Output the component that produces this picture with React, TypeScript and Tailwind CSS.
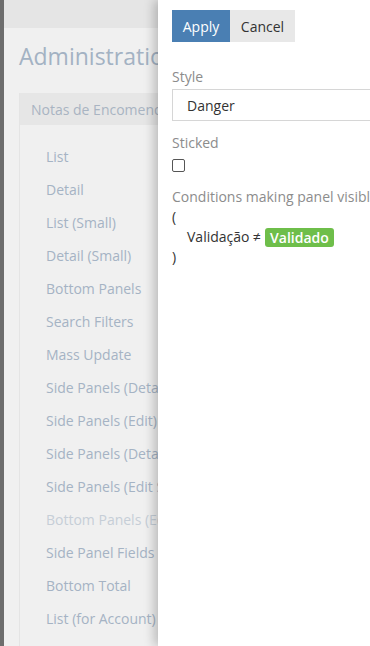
import React from 'react';

const layouts = [
  { label: 'List' },
  { label: 'Detail' },
  { label: 'List (Small)' },
  { label: 'Detail (Small)' },
  { label: 'Bottom Panels' },
  { label: 'Search Filters' },
  { label: 'Mass Update' },
  { label: 'Side Panels (Detail)' },
  { label: 'Side Panels (Edit)' },
  { label: 'Side Panels (Detail Small)' },
  { label: 'Side Panels (Edit Small)' },
  { label: 'Bottom Panels (Edit)', muted: true },
  { label: 'Side Panel Fields' },
  { label: 'Bottom Total' },
  { label: 'List (for Account)' },
];

export default function App() {
  return (
    <div
      className="relative flex h-[646px] w-[370px] overflow-hidden text-[14px]"
      style={{ fontFamily: '"Open Sans", "Liberation Sans", sans-serif' }}
    >
      {/* dark edge */}
      <div className="w-[4px] shrink-0 bg-[#6d6d6d]" />

      {/* page behind the modal */}
      <div className="flex flex-1 flex-col bg-[#f0f0f0]">
        <div className="h-[28px] bg-[#e5e5e5]" />
        <h1 className="mt-[12px] whitespace-nowrap pl-[15px] text-[23px] leading-[32px] text-[#a3b2c3]">
          Administration
        </h1>
        <div className="ml-[15px] mt-[21px] flex flex-1 flex-col border-l border-[#e4e4e4]">
          <div className="flex h-[32px] items-center whitespace-nowrap bg-[#e6e6e6] pl-[11px] text-[#a9b4c2]">
            Notas de Encomenda
          </div>
          <div className="flex flex-col pt-[15px] pl-[26px]">
            {layouts.map((item) => (
              <div
                key={item.label}
                className={`flex h-[33px] items-center whitespace-nowrap ${
                  item.muted ? 'text-[#c6ced7]' : 'text-[#a5b3c4]'
                }`}
              >
                {item.label}
              </div>
            ))}
          </div>
        </div>
      </div>

      {/* side modal */}
      <div className="absolute top-0 right-0 bottom-0 w-[212px] overflow-hidden bg-white pl-[14px] shadow-[-4px_0_10px_rgba(0,0,0,0.22)]">
        <div className="mt-[10px] flex">
          <button className="h-[32px] w-[58px] bg-[#4a7fb3] text-white">Apply</button>
          <button className="h-[32px] w-[65px] bg-[#e8e8e8] text-[#333]">Cancel</button>
        </div>

        <div className="mt-[25px] text-[#8c8c8c] leading-[20px]">Style</div>
        <div className="mt-[2px] flex h-[32px] items-center border border-r-0 border-[#d6d6d6] pl-[14px] text-[#333]">
          Danger
        </div>

        <div className="mt-[12px] text-[#8c8c8c] leading-[20px]">Sticked</div>
        <div className="mt-[6px] h-[13px] w-[13px] rounded-[2px] border border-[#555] bg-white" />

        <div className="mt-[15px] whitespace-nowrap text-[#8c8c8c] leading-[20px]">
          Conditions making panel visible
        </div>
        <div className="text-[#333] leading-[20px]">
          <div>(</div>
          <div className="flex items-center pl-[15px]">
            <span>Validação ≠</span>
            <span className="ml-[4px] rounded-[3px] bg-[#6ebe4a] px-[5px] text-[14px] font-semibold leading-[19px] text-white">
              Validado
            </span>
          </div>
          <div>)</div>
        </div>
      </div>
    </div>
  );
}
